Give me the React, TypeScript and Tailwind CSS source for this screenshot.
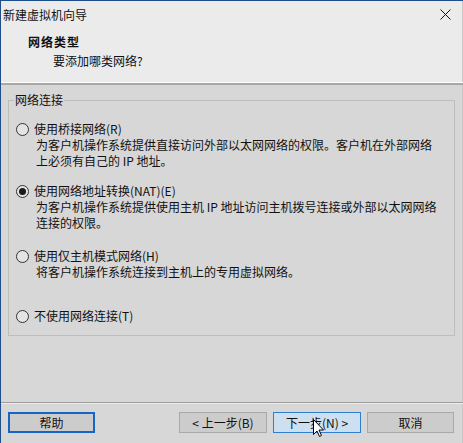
import React from "react";

function Radio({ checked }: { checked?: boolean }) {
  return (
    <span className="w-[13px] h-[13px] rounded-full border border-[#333333] bg-[#e4e4e4] flex items-center justify-center shrink-0">
      {checked && <span className="w-[7px] h-[7px] rounded-full bg-[#1a1a1a]" />}
    </span>
  );
}

function Option({ label, checked, desc }: { label: string; checked?: boolean; desc?: string[] }) {
  return (
    <div className="flex flex-col">
      <div className="flex items-center h-[16px] pl-[7px] gap-[5px]">
        <Radio checked={checked} />
        <span className="leading-[16px]">{label}</span>
      </div>
      {desc && (
        <div className="pl-[27px] flex flex-col">
          {desc.map((d) => (
            <div key={d} className="h-[16px] leading-[16px]">{d}</div>
          ))}
        </div>
      )}
    </div>
  );
}

export default function App() {
  return (
    <div
      className="w-[463px] h-[443px] bg-[#d7d7d7] border-l border-t border-[#1f4e8a] flex flex-col text-[12px] text-[#111111] overflow-hidden relative"
      style={{ fontFamily: '"Noto Sans CJK SC", "Liberation Sans", sans-serif' }}
    >
      <div className="h-[27px] bg-[#ebebeb] flex items-center justify-between pl-[2px] pr-[11px] border-r border-[#c8c8c8]">
        <span className="leading-[14px]">新建虚拟机向导</span>
        <svg width="11" height="11" viewBox="0 0 11 11">
          <path d="M0.5 0.5 L10.5 10.5 M10.5 0.5 L0.5 10.5" stroke="#111" strokeWidth="1" />
        </svg>
      </div>
      <div className="h-[54px] bg-[#ebebeb] flex flex-col pl-[27px] pt-[6px] border-r border-[#c8c8c8]">
        <div className="font-bold leading-[16px] tracking-[1px]">网络类型</div>
        <div className="pl-[25px] mt-[3px] leading-[16px]">要添加哪类网络?</div>
      </div>
      <div className="h-[1px] bg-[#ffffff]" />
      <div className="h-[2px] bg-[#a8a8a8]" />
      <div className="flex-1 flex flex-col px-[7px] pt-[8px] border-r border-[#c8c8c8]">
        <fieldset className="border border-[#bdbdbd] h-[243px] pr-[4px] pt-[14px]">
          <legend className="ml-[5px] px-[1px] leading-[14px]">网络连接</legend>
          <div className="flex flex-col">
            <Option
              label="使用桥接网络(R)"
              desc={["为客户机操作系统提供直接访问外部以太网网络的权限。客户机在外部网络", "上必须有自己的 IP 地址。"]}
            />
            <div className="h-[14px]" />
            <Option
              checked
              label="使用网络地址转换(NAT)(E)"
              desc={["为客户机操作系统提供使用主机 IP 地址访问主机拨号连接或外部以太网网络", "连接的权限。"]}
            />
            <div className="h-[17px]" />
            <Option label="使用仅主机模式网络(H)" desc={["将客户机操作系统连接到主机上的专用虚拟网络。"]} />
            <div className="h-[28px]" />
            <Option label="不使用网络连接(T)" />
          </div>
        </fieldset>
        <div className="flex-1" />
      </div>
      <div className="h-[1px] bg-[#9e9e9e]" />
      <div className="h-[1px] bg-[#ececec]" />
      <div className="h-[39px] flex items-start pt-[8px] pl-[7px] border-r border-[#c8c8c8]">
        <button className="w-[87px] h-[21px] bg-[#cccccc] border-2 border-[#1565c8] flex items-center justify-center leading-[14px]">
          帮助
        </button>
        <div className="w-[84px]" />
        <button className="w-[88px] h-[21px] bg-[#cccccc] border border-[#a9a9a9] flex items-center justify-center leading-[14px]">
          &lt; 上一步(B)
        </button>
        <div className="w-[6px]" />
        <button className="w-[88px] h-[21px] bg-[#cce0f2] border border-[#2f7fd0] flex items-center justify-center leading-[14px]">
          下一步(N) &gt;
        </button>
        <div className="w-[6px]" />
        <button className="w-[87px] h-[21px] bg-[#cccccc] border border-[#a9a9a9] flex items-center justify-center leading-[14px]">
          取消
        </button>
      </div>
      <svg className="absolute left-[312px] top-[418px]" width="12" height="19" viewBox="0 0 12 19">
        <path d="M0.5 0.5 L0.5 15.5 L4 12 L6.5 17.5 L8.5 16.5 L6 11 L10.5 11 Z" fill="#fff" stroke="#000" strokeWidth="1" />
      </svg>
    </div>
  );
}
